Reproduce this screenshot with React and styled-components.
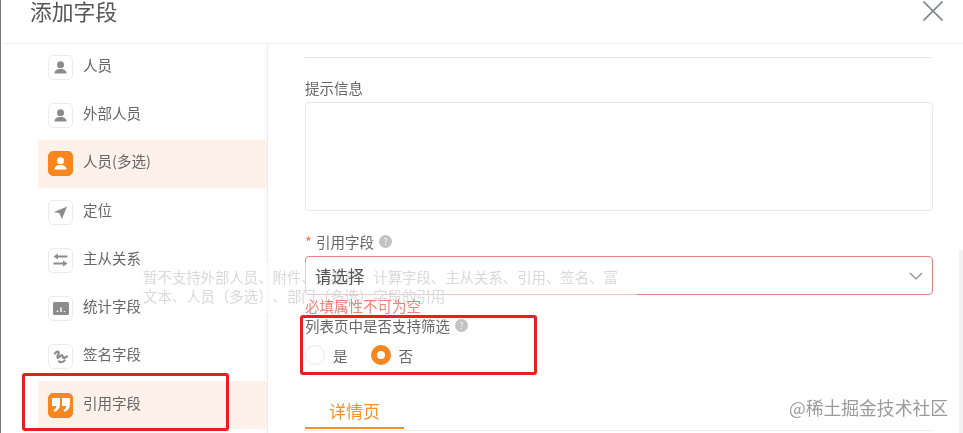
import React from 'react';
import styled, { createGlobalStyle } from 'styled-components';

const Global = createGlobalStyle`
  html, body { margin: 0; padding: 0; background: #fff; }
  body { font-family: "Noto Sans CJK SC", "Liberation Sans", sans-serif; color: #666; text-spacing-trim: space-all; }
`;

const Page = styled.div`
  position: relative;
  width: 963px;
  height: 433px;
  overflow: hidden;
  background: #fff;
  filter: blur(0.45px);
  border-left: 1px solid #777;
  box-sizing: border-box;
  display: flex;
  flex-direction: column;
`;

const Header = styled.header`
  flex: none;
  height: 44px;
  box-sizing: border-box;
  margin-left: 2px;
  padding: 0 20px 22px 27px;
  display: flex;
  justify-content: space-between;
  align-items: center;
  border-bottom: 1.5px solid #eeeeee;
`;

const Title = styled.h1`
  margin: 0;
  font-size: 21.8px;
  font-weight: 400;
  line-height: 22px;
  color: #555;
`;

const Close = styled.button`
  border: 0;
  background: none;
  padding: 0;
  display: block;
  width: 20px;
  height: 20px;
  color: #80848c;
`;

const Body = styled.div`
  flex: 1;
  min-height: 0;
  display: flex;
`;

const Sidebar = styled.nav`
  flex: none;
  box-sizing: content-box;
  padding-left: 37px;
  width: 229px;
  border-right: 1px solid #ececec;
  overflow: hidden;
`;

const List = styled.ul`
  list-style: none;
  margin: -1px 0 0;
  padding: 0;
`;

const Item = styled.li`
  height: 48.3px;
  display: flex;
  align-items: center;
  gap: 10px;
  padding-left: 10px;
  font-size: 14.5px;
  color: #666;
  background: ${p => (p.$active ? '#fdf1ea' : 'transparent')};
`;

const ItemName = styled.span`
  padding-bottom: 6px;
`;

const IconBox = styled.span`
  flex: none;
  width: 25px;
  height: 25px;
  box-sizing: border-box;
  border-radius: 5px;
  display: flex;
  align-items: center;
  justify-content: center;
  border: 1px solid ${p => (p.$active ? '#f7861f' : '#ececec')};
  background: ${p => (p.$active ? '#f7861f' : '#fff')};
  color: ${p => (p.$active ? '#fff' : '#8c8c8c')};
`;

const Main = styled.main`
  flex: 1;
  min-width: 0;
  padding: 13px 30px 0 37px;
  display: flex;
  flex-direction: column;
`;

const Divider = styled.hr`
  margin: 0 2px 19px 0;
  border: 0;
  border-top: 1px solid #e4e4e4;
`;

const Label = styled.label`
  display: flex;
  align-items: center;
  gap: 5px;
  height: 20px;
  font-size: 14.5px;
  color: #666;
`;

const Required = styled.span`
  color: #f0705a;
  margin-right: 1px;
`;

const Help = styled.span`
  width: 13px;
  height: 13px;
  border-radius: 50%;
  background: #c2c2c2;
  color: #fff;
  font-size: 9px;
  line-height: 13px;
  text-align: center;
`;

const TextArea = styled.div`
  height: 109px;
  margin: 5px 0 20px;
  box-sizing: border-box;
  border: 1px solid #e8e8e8;
  border-radius: 4px;
`;

const Select = styled.div`
  height: 39px;
  margin-top: 5px;
  box-sizing: border-box;
  border: 1px solid #e58282;
  border-radius: 4px;
  padding: 0 9px 0 9px;
  display: flex;
  align-items: center;
  justify-content: space-between;
  font-size: 16.5px;
  color: #555;
`;

const SelectValue = styled.span`
  position: relative;
  z-index: 2;
`;

const ErrorText = styled.div`
  position: relative;
  z-index: 2;
  height: 19px;
  margin-top: 1px;
  line-height: 20px;
  font-size: 14.5px;
  color: #f47f78;
`;

const RadioRow = styled.div`
  display: flex;
  align-items: center;
  margin-top: 10px;
  height: 20px;
  gap: 23px;
`;

const RadioOption = styled.span`
  display: flex;
  align-items: center;
  gap: 8px;
  font-size: 14.5px;
  color: #666;
`;

const RadioDot = styled.span`
  width: 20px;
  height: 20px;
  box-sizing: border-box;
  border-radius: 50%;
  border: ${p => (p.$on ? '6px solid #f7861f' : '1px solid #e6e6e6')};
  background: #fff;
`;

const Tabs = styled.div`
  margin-top: 30px;
  border-bottom: 1px solid #ececec;
  padding-bottom: 1px;
  display: flex;
`;

const Tab = styled.div`
  width: 99px;
  box-sizing: border-box;
  text-align: center;
  height: 34px;
  line-height: 31px;
  font-size: 17px;
  color: #f5912c;
  border-bottom: 2px solid #f5912c;
`;

const Tooltip = styled.div`
  position: absolute;
  z-index: 1;
  left: 142px;
  top: 262px;
  width: 494px;
  height: 52px;
  box-sizing: border-box;
  padding: 5px 0 0 0;
  border-radius: 8px;
  background: rgba(255, 255, 255, 0.55);
  box-shadow: 0 0 6px rgba(0, 0, 0, 0.025);
  font-size: 14.4px;
  line-height: 19px;
  color: #d9d9d9;
  white-space: nowrap;
`;

const Annotation = styled.div`
  position: absolute;
  z-index: 3;
  left: ${p => p.$x}px;
  top: ${p => p.$y}px;
  width: ${p => p.$w}px;
  height: ${p => p.$h}px;
  box-sizing: border-box;
  border: 3px solid #e8201c;
  border-radius: 3px;
`;

const Watermark = styled.div`
  position: absolute;
  z-index: 3;
  right: 15px;
  top: 396px;
  font-size: 17.8px;
  line-height: 22px;
  color: #9a9a9a;
`;

const Scrollbar = styled.div`
  position: absolute;
  right: 0;
  top: 250px;
  bottom: 0;
  width: 4px;
  background: #f2f2f2;
`;

const UserIcon = ({ size = 15 }) => (
  <svg width={size} height={size} viewBox="0 0 16 16" fill="currentColor">
    <circle cx="8" cy="5" r="3.800" />
    <path d="M1.500 14.500c0-3 2.200-4.200 4.600-4.800h3.800c2.400.6 4.600 1.800 4.600 4.800z" />
  </svg>
);

const icons = {
  user: <UserIcon />,
  nav: (
    <svg width="15" height="15" viewBox="0 0 16 16" fill="currentColor">
      <path d="M15 1.500 1 7.500l5.800 1.400L9.500 15z" />
    </svg>
  ),
  swap: (
    <svg width="15" height="14" viewBox="0 0 15 14" fill="currentColor">
      <path d="M5 .5 0.500 3.500 5 6.500V4.500h9.500v-2H5zM10 7.500v2H.5v2H10v2l4.500-3z" />
    </svg>
  ),
  chart: (
    <svg width="16" height="13" viewBox="0 0 16 13">
      <rect x="0" y="0" width="16" height="13" rx="1.500" fill="currentColor" />
      <path d="M4.500 10V8.500M8 10V5.500M11.500 10V9" stroke="#fff" strokeWidth="1.400" />
    </svg>
  ),
  sign: (
    <svg width="16" height="15" viewBox="0 0 16 15" fill="none" stroke="currentColor" strokeWidth="2.200" strokeLinecap="round">
      <path d="M2 4.500c1.500-2.500 4-2.500 3.800-.3C5.600 6 3.500 7 4.500 8.500s3-2.500 4.500-2.500 0 3 1.500 3 2-1 3.500-1.500M6 12.500c2 1 4.500.5 5.500-1" />
    </svg>
  ),
  quote: (
    <svg width="20" height="16" viewBox="0 0 20 16" fill="currentColor">
      <path d="M1 1h7.500c.4 0 .5.200.5.500V7c0 4-2 6.800-5.500 8L2.500 13C4.300 12 5.200 10.700 5.300 9H1.500c-.3 0-.5-.2-.5-.5zM11 1h7.500c.4 0 .5.200.5.500V7c0 4-2 6.800-5.500 8l-1-2c1.800-1 2.700-2.300 2.800-4h-3.800c-.3 0-.5-.2-.5-.5z" />
    </svg>
  ),
};

const fields = [
  { name: '人员', icon: 'user' },
  { name: '外部人员', icon: 'user' },
  { name: '人员(多选)', icon: 'user', active: true },
  { name: '定位', icon: 'nav' },
  { name: '主从关系', icon: 'swap' },
  { name: '统计字段', icon: 'chart' },
  { name: '签名字段', icon: 'sign' },
  { name: '引用字段', icon: 'quote', active: true },
];

export default function App() {
  return (
    <>
      <Global />
      <Page>
        <Header>
          <Title>添加字段</Title>
          <Close aria-label="关闭">
            <svg width="20" height="20" viewBox="0 0 20 20" stroke="currentColor" strokeWidth="1.600" fill="none">
              <path d="M.5.5l19 19M19.500.5l-19 19" />
            </svg>
          </Close>
        </Header>
        <Body>
          <Sidebar>
            <List>
              {fields.map(f => (
                <Item key={f.name} $active={f.active}>
                  <IconBox $active={f.active}>{icons[f.icon]}</IconBox>
                  <ItemName>{f.name}</ItemName>
                </Item>
              ))}
            </List>
          </Sidebar>
          <Main>
            <Divider />
            <Label>提示信息</Label>
            <TextArea />
            <Label><span><Required>*</Required> 引用字段</span><Help>?</Help></Label>
            <Select>
              <SelectValue>请选择</SelectValue>
              <svg width="14" height="8" viewBox="0 0 14 8" fill="none" stroke="#888" strokeWidth="1.200">
                <path d="M1 1l6 6 6-6" />
              </svg>
            </Select>
            <ErrorText>必填属性不可为空</ErrorText>
            <Label>列表页中是否支持筛选<Help>?</Help></Label>
            <RadioRow>
              <RadioOption><RadioDot />是</RadioOption>
              <RadioOption><RadioDot $on />否</RadioOption>
            </RadioRow>
            <Tabs><Tab>详情页</Tab></Tabs>
          </Main>
        </Body>
        <Tooltip>
          暂不支持外部人员、附件、子表单、计算字段、主从关系、引用、签名、富
          <br />
          文本、人员（多选）、部门（多选）字段的引用
        </Tooltip>
        <Annotation $x={21} $y={373} $w={207} $h={58} />
        <Annotation $x={299} $y={315} $w={237} $h={60} />
        <Scrollbar />
        <Watermark>@稀土掘金技术社区</Watermark>
      </Page>
    </>
  );
}
